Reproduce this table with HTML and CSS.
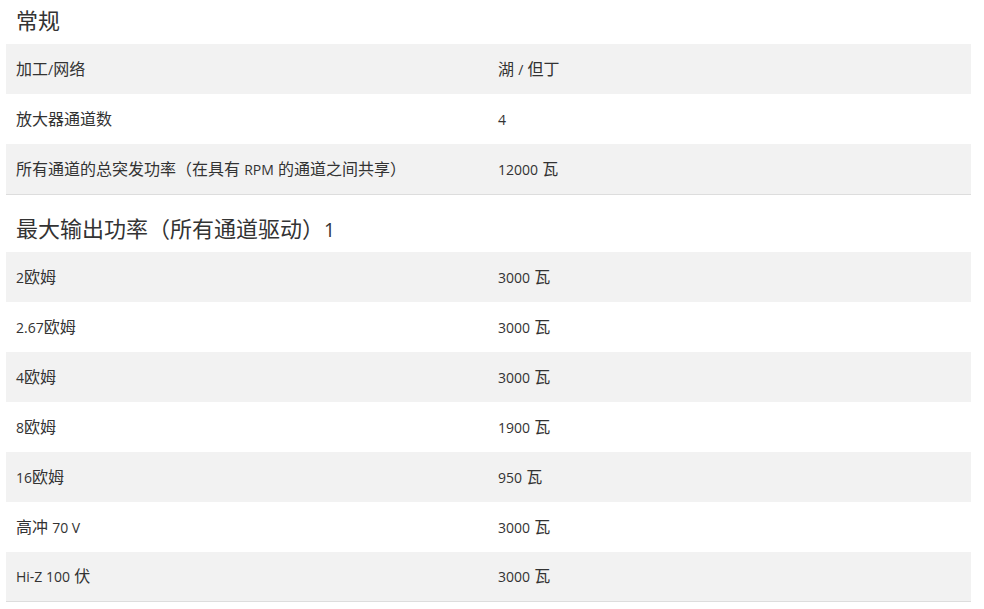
FILE: index.html
```html
<!DOCTYPE html>
<html lang="zh">
<head>
<meta charset="utf-8">
<title>规格</title>
<link rel="stylesheet" href="styles.css">
</head>
<body>
<div class="page">
  <h2 class="section-title first">常规</h2>
  <table class="spec">
    <colgroup><col class="c1"><col class="c2"></colgroup>
    <tr><td>加工<span class="lat">/</span>网络</td><td>湖 <span class="lat">/</span> 但丁</td></tr>
    <tr><td>放大器通道数</td><td><span class="lat">4</span></td></tr>
    <tr><td>所有通道的总突发功率（在具有 <span class="lat">RPM</span> 的通道之间共享）</td><td><span class="lat">12000</span> 瓦</td></tr>
  </table>
  <h2 class="section-title">最大输出功率（所有通道驱动）<span class="lat">1</span></h2>
  <table class="spec">
    <colgroup><col class="c1"><col class="c2"></colgroup>
    <tr><td><span class="lat">2</span>欧姆</td><td><span class="lat">3000</span> 瓦</td></tr>
    <tr><td><span class="lat">2.67</span>欧姆</td><td><span class="lat">3000</span> 瓦</td></tr>
    <tr><td><span class="lat">4</span>欧姆</td><td><span class="lat">3000</span> 瓦</td></tr>
    <tr><td><span class="lat">8</span>欧姆</td><td><span class="lat">1900</span> 瓦</td></tr>
    <tr><td><span class="lat">16</span>欧姆</td><td><span class="lat">950</span> 瓦</td></tr>
    <tr><td>高冲 <span class="lat">70 V</span></td><td><span class="lat">3000</span> 瓦</td></tr>
    <tr><td><span class="lat">Hi-Z 100</span> 伏</td><td><span class="lat">3000</span> 瓦</td></tr>
  </table>
</div>
</body>
</html>
```
FILE: styles.css
```css
html, body {
  margin: 0;
  padding: 0;
  background: #fff;
}
body {
  font-family: "Open Sans", "Noto Sans CJK SC", sans-serif;
  color: #333;
  font-size: 16px;
}
.page {
  padding: 0 13px 0 6px;
}
.lat {
  font-size: 0.875em;
  line-height: 1;
}
.section-title {
  margin: 19px 0 10px;
  padding-left: 10px;
  height: 28px;
  font-size: 22px;
  line-height: 28px;
  font-weight: 400;
  color: #333;
}
.section-title.first {
  margin-top: 6px;
}
.spec {
  width: 100%;
  border-collapse: collapse;
  border-bottom: 1px solid #ddd;
}
.spec .c1 { width: 482px; }
.spec td {
  height: 50px;
  padding: 0 10px;
  box-sizing: border-box;
  vertical-align: middle;
  line-height: 20px;
}
.spec tr:nth-child(odd) td {
  background: #f2f2f2;
}
```
